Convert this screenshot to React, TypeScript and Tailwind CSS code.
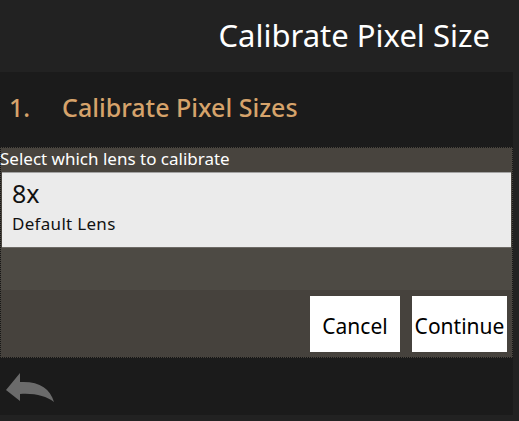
const font = { fontFamily: '"Noto Sans", "Open Sans", sans-serif' };

const BackArrow = () => (
    <svg width="52" height="32" viewBox="0 0 52 32" className="block">
        <path
            d="M1 19 L15 2 L15 11 C34 10 45 17 49 31 C41 25 30 22 15 23 L15 30 Z"
            fill="#6b6b6b"
        />
    </svg>
);

const App = () => {
    return (
        <div className="w-[519px] h-[421px] bg-[#222222] overflow-hidden" style={font}>
            {/* Page header */}
            <header className="h-[72px] flex items-center justify-end pr-[29px]">
                <h1 className="text-[31px] leading-none text-white font-normal pb-[2px]">Calibrate Pixel Size</h1>
            </header>

            <div className="w-[513px]">
                {/* Step header */}
                <div className="h-[75px] bg-[#1b1b1b] flex items-center pl-[9px] pb-[4px] text-[25px] font-medium text-[#d6a36b]">
                    <span className="w-[53px]">1.</span>
                    <span>Calibrate Pixel Sizes</span>
                </div>

                {/* Lens panel */}
                <div className="h-[211px] border border-dotted border-[#161616] bg-[#48443e] flex flex-col">
                    <div className="h-[24px] text-[17px] leading-[21px] text-white -ml-px whitespace-nowrap">Select which lens to calibrate</div>
                    <div className="mx-px h-[76px] bg-[#ebebeb] border-t border-t-[#a3a3a3] border-b border-b-[#6d6a65] px-[10px] pt-[5px] text-[#111]">
                        <div className="text-[25px] leading-[30px]">8x</div>
                        <div className="text-[17px] leading-[22px] mt-[5px] tracking-[0.3px]">Default Lens</div>
                    </div>
                    <div className="h-[42px] bg-[#4d4a44]" />
                    <div className="flex-1 bg-[#46423d] flex justify-end items-start gap-[12px] pt-[6px] pr-[5px]">
                        <button className="w-[90px] h-[56px] pt-[5px] bg-white text-black text-[21px]">Cancel</button>
                        <button className="w-[95px] h-[56px] pt-[5px] bg-white text-black text-[21px] whitespace-nowrap">Continue</button>
                    </div>
                </div>

                {/* Footer */}
                <div className="h-[57px] bg-[#1b1b1b] flex items-center pl-[5px]">
                    <BackArrow />
                </div>
            </div>
        </div>
    );
};

export default App;
